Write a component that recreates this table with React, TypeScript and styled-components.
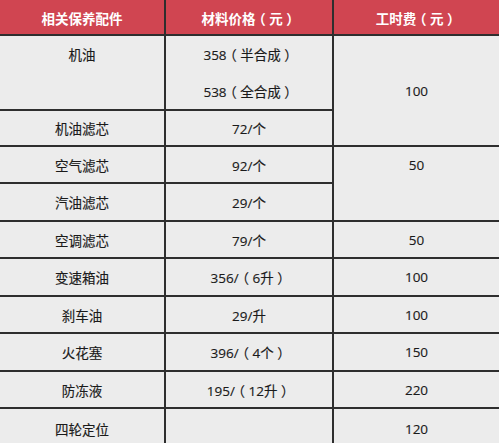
import React from "react";
import styled, { createGlobalStyle } from "styled-components";

const Global = createGlobalStyle`
  html, body { margin: 0; padding: 0; background: #ececec; }
  body { font-family: "Open Sans", "Noto Sans CJK SC", sans-serif; }
`;

const Grid = styled.div`
  display: grid;
  width: 499px;
  height: 443px;
  overflow: hidden;
  grid-template-columns: 164px 166px 1fr;
  grid-template-rows: 34px 73px 34px 35px 36px 35px 36px 35px 36px 35px 40px;
  gap: 2px;
  background: #2e2e2e;
`;

const HeadCell = styled.div`
  background: #d04551;
  color: #fff;
  font-family: "Noto Sans CJK SC", sans-serif;
  font-weight: 700;
  font-size: 13.5px;
  display: flex;
  align-items: center;
  justify-content: center;
  padding-top: 1px;
`;

const Cell = styled.div<{ $top?: boolean; $rowSpan?: number }>`
  background: #ececec;
  color: #1a1a1a;
  font-size: 13.5px;
  display: flex;
  flex-direction: column;
  align-items: center;
  justify-content: ${(p) => (p.$top ? "flex-start" : "center")};
  grid-row: ${(p) => (p.$rowSpan ? `span ${p.$rowSpan}` : "auto")};
  -webkit-text-stroke: 0.15px #1a1a1a;
`;

const Line = styled.div`
  height: 36.5px;
  display: flex;
  align-items: center;
  justify-content: center;
  white-space: nowrap;
`;

const TopLine = styled.div`
  height: 36px;
  display: flex;
  align-items: center;
`;

const Paren = styled.span`
  font-family: "Noto Sans CJK SC", sans-serif;
  font-feature-settings: "halt" 1;
  padding: 0 0.26em;
`;

const Price = ({ value, note }: { value: string; note: string }) => (
  <span>
    {value}
    <Paren>（</Paren>
    {note}
    <Paren>）</Paren>
  </span>
);

export default function App() {
  return (
    <>
      <Global />
      <Grid>
        <HeadCell>相关保养配件</HeadCell>
        <HeadCell>
          材料价格<Paren>（</Paren>元<Paren>）</Paren>
        </HeadCell>
        <HeadCell>
          工时费<Paren>（</Paren>元<Paren>）</Paren>
        </HeadCell>

        <Cell $top>
          <Line>机油</Line>
        </Cell>
        <Cell $top>
          <Line>
            <Price value="358" note="半合成" />
          </Line>
          <Line>
            <Price value="538" note="全合成" />
          </Line>
        </Cell>
        <Cell $rowSpan={2}>100</Cell>

        <Cell>机油滤芯</Cell>
        <Cell>72/个</Cell>

        <Cell>空气滤芯</Cell>
        <Cell>92/个</Cell>
        <Cell $rowSpan={2} $top>
          <TopLine>50</TopLine>
        </Cell>

        <Cell>汽油滤芯</Cell>
        <Cell>29/个</Cell>

        <Cell>空调滤芯</Cell>
        <Cell>79/个</Cell>
        <Cell>50</Cell>

        <Cell>变速箱油</Cell>
        <Cell>
          <Price value="356/" note="6升" />
        </Cell>
        <Cell>100</Cell>

        <Cell>刹车油</Cell>
        <Cell>29/升</Cell>
        <Cell>100</Cell>

        <Cell>火花塞</Cell>
        <Cell>
          <Price value="396/" note="4个" />
        </Cell>
        <Cell>150</Cell>

        <Cell>防冻液</Cell>
        <Cell>
          <Price value="195/" note="12升" />
        </Cell>
        <Cell>220</Cell>

        <Cell>四轮定位</Cell>
        <Cell></Cell>
        <Cell>120</Cell>
      </Grid>
    </>
  );
}
